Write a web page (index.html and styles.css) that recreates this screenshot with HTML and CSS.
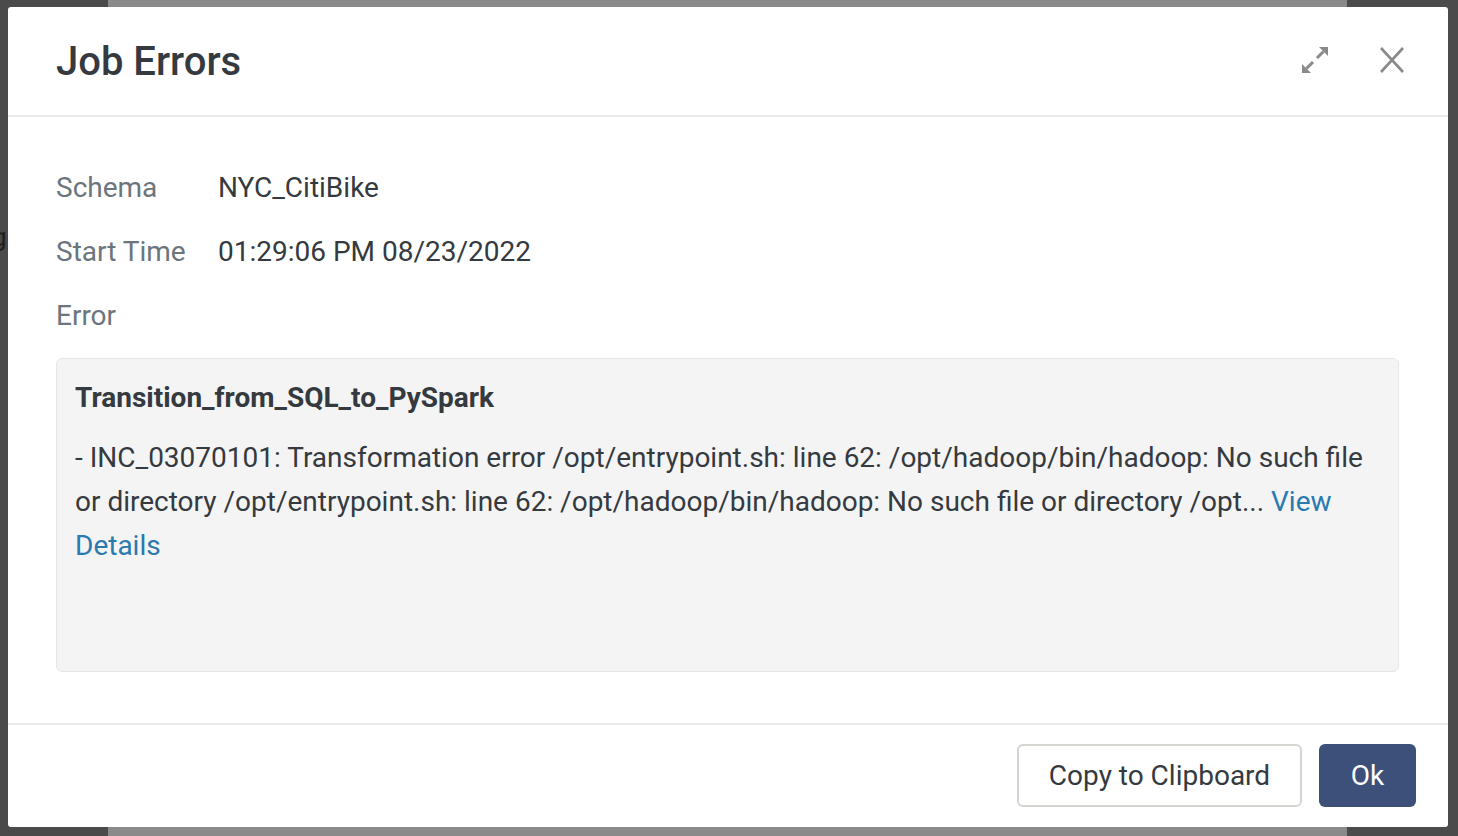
FILE: index.html
```html
<!DOCTYPE html>
<html lang="en">
<head>
<meta charset="utf-8">
<title>Job Errors</title>
<link rel="stylesheet" href="styles.css">
</head>
<body>
<div class="backdrop">
  <span class="peek">g</span>
  <div class="modal">
    <header class="modal-header">
      <h1 class="modal-title">Job Errors</h1>
      <div class="header-actions">
        <button class="icon-btn" aria-label="Expand">
          <svg width="26" height="26" viewBox="0 0 26 26">
            <path d="M26 0 L26 9 L17 0 Z" fill="#8a8a8a"/>
            <path d="M21.5 4.5 L15 11" stroke="#8a8a8a" stroke-width="3"/>
            <path d="M0 26 L0 17 L9 26 Z" fill="#8a8a8a"/>
            <path d="M4.5 21.5 L11 15" stroke="#8a8a8a" stroke-width="3"/>
          </svg>
        </button>
        <button class="icon-btn" aria-label="Close">
          <svg width="24" height="26" viewBox="0 0 24 26">
            <path d="M1 1 L23 25 M23 1 L1 25" stroke="#8a8a8a" stroke-width="2.6" fill="none"/>
          </svg>
        </button>
      </div>
    </header>
    <main class="modal-body">
      <div class="info-grid">
        <div class="label">Schema</div>
        <div class="value">NYC_CitiBike</div>
        <div class="label">Start Time</div>
        <div class="value">01:29:06 PM 08/23/2022</div>
        <div class="label">Error</div>
        <div></div>
      </div>
      <div class="error-box">
        <div class="error-title">Transition_from_SQL_to_PySpark</div>
        <p class="error-text">- INC_03070101: Transformation error /opt/entrypoint.sh: line 62: /opt/hadoop/bin/hadoop: No such file or directory /opt/entrypoint.sh: line 62: /opt/hadoop/bin/hadoop: No such file or directory /opt... <a class="link" href="#">View Details</a></p>
      </div>
    </main>
    <footer class="modal-footer">
      <button class="btn btn-outline">Copy to Clipboard</button>
      <button class="btn btn-primary">Ok</button>
    </footer>
  </div>
</div>
</body>
</html>
```

FILE: styles.css
```css
html, body {
  margin: 0;
  padding: 0;
}
body {
  width: 1458px;
  height: 836px;
  overflow: hidden;
  font-family: Roboto, "Liberation Sans", sans-serif;
  background: linear-gradient(to right, #4a4a4a 0, #4a4a4a 108px, #8a8a8a 108px, #8a8a8a 1347px, #4b4b4b 1347px);
}
.backdrop {
  position: relative;
  box-sizing: border-box;
  height: 836px;
  padding: 7px 10px 9px 8px;
  display: flex;
}
.peek {
  position: absolute;
  left: -8px;
  top: 222px;
  font-size: 26px;
  color: #1e1e1e;
}
.modal {
  position: relative;
  flex: 1;
  background: #fff;
  border-radius: 3px;
  display: flex;
  flex-direction: column;
}
.modal-header {
  height: 108px;
  border-bottom: 2px solid #e9e9e9;
  display: flex;
  align-items: center;
  justify-content: space-between;
  padding: 0 44px 0 48px;
}
.modal-title {
  margin: 0;
  font-size: 40px;
  font-weight: 500;
  color: #343a40;
}
.header-actions {
  display: flex;
  align-items: center;
  gap: 52px;
  margin-top: -2px;
}
.icon-btn {
  border: 0;
  background: none;
  padding: 0;
  display: flex;
  cursor: pointer;
}
.modal-body {
  flex: 1;
  padding: 51px 49px 48px 48px;
  display: flex;
  flex-direction: column;
}
.info-grid {
  display: grid;
  grid-template-columns: 162px auto;
  row-gap: 24px;
  font-size: 28px;
  line-height: 40px;
}
.label {
  color: #6c757d;
}
.value {
  color: #343a40;
}
.error-box {
  margin-top: 22px;
  box-sizing: border-box;
  height: 314px;
  background: #f4f4f4;
  border: 1px solid #e6e6e6;
  border-radius: 6px;
  padding: 19px 18px 18px;
  color: #343a40;
}
.error-title {
  font-size: 28px;
  font-weight: 700;
  line-height: 40px;
}
.error-text {
  margin: 18px 0 0;
  font-size: 28px;
  line-height: 44px;
}
.link {
  color: #2a7ab0;
  text-decoration: none;
}
.modal-footer {
  border-top: 2px solid #e9e9e9;
  height: 104px;
  box-sizing: border-box;
  display: flex;
  justify-content: flex-end;
  align-items: center;
  gap: 17px;
  padding: 0 32px 0 0;
}
.btn {
  font-family: Roboto, "Liberation Sans", sans-serif;
  font-size: 28px;
  height: 63px;
  border-radius: 6px;
  cursor: pointer;
  margin-top: -2px;
}
.btn-outline {
  width: 285px;
  background: #fff;
  border: 2px solid #d4d4d0;
  color: #343a40;
}
.btn-primary {
  width: 97px;
  background: #3c5079;
  border: 0;
  color: #fff;
}
```
